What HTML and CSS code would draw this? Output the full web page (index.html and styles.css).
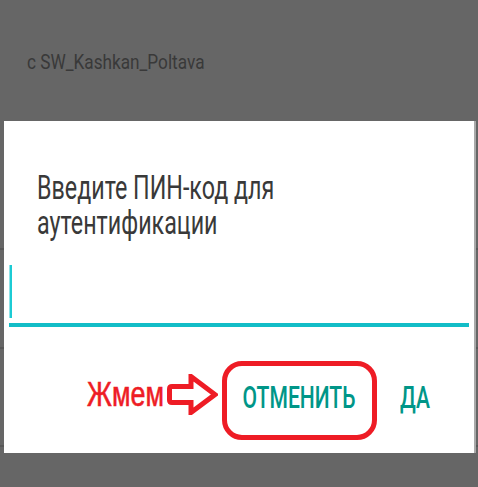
FILE: index.html
```html
<!DOCTYPE html>
<html lang="ru">
<head>
<meta charset="utf-8">
<title>PIN</title>
<link rel="stylesheet" href="styles.css">
</head>
<body>
  <div class="appbar"><span class="appbar-title">c SW_Kashkan_Poltava</span></div>
  <div class="dialog">
    <h1 class="dialog-title">
      <span class="title-line">Введите ПИН-код для</span>
      <span class="title-line">аутентификации</span>
    </h1>
    <div class="pin-field"><span class="caret"></span></div>
    <div class="actions">
      <div class="hint"><span class="hint-text">Жмем</span></div>
      <svg class="arrow" width="51" height="41" viewBox="0 0 51 41" aria-hidden="true">
        <path d="M5 12.5 H24 V2.5 L48 20.5 L24 38.5 V28.5 H5 Q2.5 28.5 2.5 26 V15 Q2.5 12.5 5 12.5 Z" fill="#fff" stroke="#ee1c25" stroke-width="5" stroke-linejoin="miter"/>
      </svg>
      <div class="cancel-ring"><span class="btn-text btn-cancel">ОТМЕНИТЬ</span></div>
      <div class="btn-ok"><span class="btn-text btn-ok-text">ДА</span></div>
    </div>
  </div>
</body>
</html>
```
FILE: styles.css
```css
* { box-sizing: border-box; margin: 0; padding: 0; }
html, body { width: 478px; height: 487px; overflow: hidden; }
body {
  background-color: #666666;
  background-image:
    linear-gradient(to bottom, transparent 248px, #585858 248px, #585858 250px, transparent 250px),
    linear-gradient(to bottom, transparent 347px, #585858 347px, #585858 349px, transparent 349px),
    linear-gradient(to bottom, transparent 445px, #585858 445px, #585858 447px, transparent 447px);
  font-family: Roboto, "Noto Sans", sans-serif;
}
.appbar { height: 121px; padding: 50px 0 0 27px; }
.appbar-title {
  display: inline-block;
  font-size: 20px;
  line-height: 24px;
  color: #393939;
  white-space: nowrap;
  transform: scaleX(0.86);
  transform-origin: left center;
}
.dialog {
  margin-left: 4px;
  width: 470px;
  height: 332px;
  background: #ffffff;
  box-shadow: 2px 0 0 #a9a9a9;
}
.dialog-title {
  padding: 49px 0 0 33px;
  font-size: 34px;
  line-height: 35px;
  font-weight: 400;
  color: #393939;
}
.title-line {
  display: block;
  white-space: nowrap;
  transform: scaleX(0.685);
  transform-origin: left center;
}
.pin-field {
  margin: 25px 5px 0;
  height: 62px;
  border-bottom: 4px solid #12bdc7;
}
.caret {
  display: block;
  width: 3px;
  height: 53px;
  background: #1ccbd4;
  border-left: 1px solid #8fe3e8;
}
.actions {
  display: flex;
  align-items: flex-start;
  margin-top: 34px;
  padding-left: 83px;
  height: 79px;
}
.hint { width: 80px; margin-top: 13px; }
.hint-text {
  display: inline-block;
  font-family: "Liberation Sans", Arial, sans-serif;
  font-size: 35px;
  line-height: 40px;
  color: #ee1c25;
  -webkit-text-stroke: 0.6px #ee1c25;
  white-space: nowrap;
  transform: scaleX(0.77);
  transform-origin: left center;
}
.arrow { display: block; margin-top: 13px; flex: none; }
.cancel-ring {
  margin-left: 4px;
  width: 155px;
  height: 79px;
  border: 5px solid #ee1c25;
  border-radius: 20px;
  display: flex;
  justify-content: center;
  align-items: flex-start;
  padding-top: 14px;
  flex: none;
}
.btn-text {
  display: inline-block;
  font-size: 31px;
  line-height: 36px;
  font-weight: 500;
  color: #009688;
  white-space: nowrap;
  transform: scaleX(0.68);
}
.btn-cancel { transform-origin: center center; }
.btn-ok { margin-left: 23px; margin-top: 19px; }
.btn-ok-text { transform-origin: left center; }
```
